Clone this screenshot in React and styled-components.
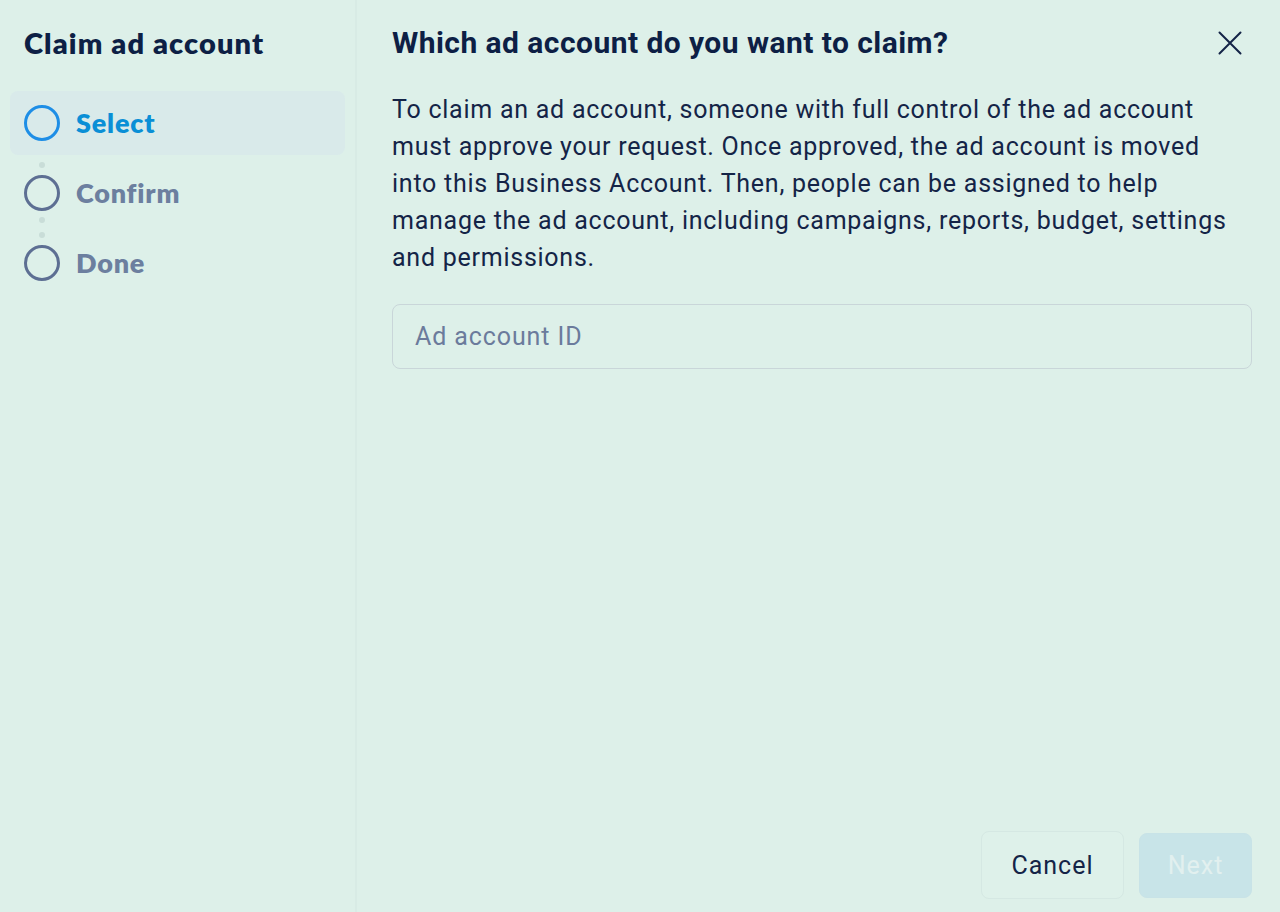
import React from 'react';
import styled, { createGlobalStyle } from 'styled-components';

const GlobalStyle = createGlobalStyle`
  html, body {
    margin: 0;
    padding: 0;
    background: #ddf0e9;
  }
  * { box-sizing: border-box; }
`;

const Page = styled.div`
  display: flex;
  width: 1280px;
  height: 912px;
  background: #ddf0e9;
  font-family: Roboto, "Liberation Sans", sans-serif;
  color: #142447;
`;

const Sidebar = styled.aside`
  width: 357px;
  flex-shrink: 0;
  padding: 26px 10px 0 10px;
  border-right: 2px solid #d8ebe5;
`;

const SideTitle = styled.h1`
  margin: 0 0 0 14px;
  font-family: Lato, "Liberation Sans", sans-serif;
  font-weight: 800;
  font-size: 29px;
  letter-spacing: 1.1px;
  line-height: 34px;
  color: #0d1f45;
`;

const Steps = styled.ol`
  list-style: none;
  margin: 31px 0 0;
  padding: 0;
`;

const Step = styled.li`
  position: relative;
  display: flex;
  align-items: center;
  gap: 16px;
  height: 64px;
  margin-bottom: 6px;
  padding-left: 14px;
  border-radius: 8px;
  background: ${p => (p.$active ? '#d9eaea' : 'transparent')};
`;

const Circle = styled.span`
  width: 36px;
  height: 36px;
  border-radius: 50%;
  border: 3px solid ${p => (p.$active ? '#1e8ee6' : '#5d6f93')};
  flex-shrink: 0;
`;

const StepLabel = styled.span`
  font-family: Lato, "Liberation Sans", sans-serif;
  font-weight: 800;
  font-size: 27px;
  letter-spacing: 0.8px;
  margin-top: -2px;
  color: ${p => (p.$active ? '#0a8fd6' : '#6c7f9f')};
`;

const Dot = styled.span`
  position: absolute;
  left: 29px;
  top: ${p => p.$top}px;
  width: 6px;
  height: 6px;
  border-radius: 50%;
  background: #c9ddd8;
`;

const Main = styled.main`
  flex: 1;
  display: flex;
  flex-direction: column;
  padding: 23px 28px 13px 35px;
`;

const Header = styled.div`
  display: flex;
  align-items: center;
  justify-content: space-between;
`;

const Heading = styled.h2`
  margin: 0;
  font-family: Roboto, "Liberation Sans", sans-serif;
  font-weight: 700;
  font-size: 30px;
  line-height: 40px;
  letter-spacing: 0.45px;
  color: #0d1f45;
`;

const CloseButton = styled.button`
  border: none;
  background: none;
  padding: 0;
  width: 24px;
  height: 24px;
  margin-right: 10px;
  cursor: pointer;
  color: #142447;
`;

const Body = styled.p`
  margin: 28px 0 0;
  font-size: 25px;
  line-height: 37px;
  letter-spacing: 0.75px;
  color: #142447;
  white-space: nowrap;
`;

const Input = styled.input`
  margin-top: 28px;
  height: 65px;
  width: 100%;
  border: 1.5px solid #c9d6d9;
  border-radius: 8px;
  background: transparent;
  padding: 0 22px;
  font-family: Roboto, "Liberation Sans", sans-serif;
  font-size: 25px;
  letter-spacing: 0.9px;
  color: #142447;
  &::placeholder { color: #6b7b9c; }
`;

const Footer = styled.div`
  margin-top: auto;
  display: flex;
  justify-content: flex-end;
  align-items: center;
  gap: 15px;
`;

const Button = styled.button`
  height: ${p => (p.$primary ? 65 : 68)}px;
  width: ${p => (p.$primary ? 113 : 143)}px;
  padding: 0;
  border-radius: 8px;
  font-family: Roboto, "Liberation Sans", sans-serif;
  font-size: 25px;
  letter-spacing: 1px;
  border: 1.5px solid ${p => (p.$primary ? '#c8e3e7' : '#d5e8e3')};
  background: ${p => (p.$primary ? '#c8e4e8' : '#def1ea')};
  color: ${p => (p.$primary ? '#e2f0ef' : '#142447')};
`;

const steps = ['Select', 'Confirm', 'Done'];

export default function App() {
  return (
    <Page>
      <GlobalStyle />
      <Sidebar>
        <SideTitle>Claim ad account</SideTitle>
        <Steps>
          {steps.map((s, i) => (
            <Step key={s} $active={i === 0}>
              <Circle $active={i === 0} />
              <StepLabel $active={i === 0}>{s}</StepLabel>
              {i === 0 && <Dot $top={71} />}
              {i === 1 && (
                <>
                  <Dot $top={56} />
                  <Dot $top={71} />
                </>
              )}
            </Step>
          ))}
        </Steps>
      </Sidebar>
      <Main>
        <Header>
          <Heading>Which ad account do you want to claim?</Heading>
          <CloseButton aria-label="Close">
            <svg width="24" height="24" viewBox="0 0 24 24" fill="none" stroke="currentColor" strokeWidth="2" strokeLinecap="round">
              <path d="M1.5 1.5 L22.5 22.5 M22.5 1.5 L1.5 22.5" />
            </svg>
          </CloseButton>
        </Header>
        <Body>
          To claim an ad account, someone with full control of the ad account<br />
          must approve your request. Once approved, the ad account is moved<br />
          into this Business Account. Then, people can be assigned to help<br />
          manage the ad account, including campaigns, reports, budget, settings<br />
          and permissions.
        </Body>
        <Input placeholder="Ad account ID" />
        <Footer>
          <Button>Cancel</Button>
          <Button $primary>Next</Button>
        </Footer>
      </Main>
    </Page>
  );
}
